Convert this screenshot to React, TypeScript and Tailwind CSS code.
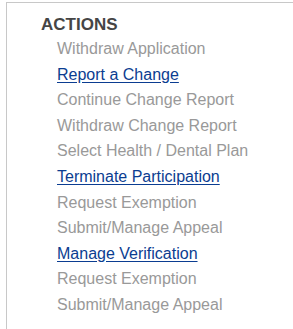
import React from 'react';

type Action = { label: string; link?: boolean };

const actions: Action[] = [
  { label: 'Withdraw Application' },
  { label: 'Report a Change', link: true },
  { label: 'Continue Change Report' },
  { label: 'Withdraw Change Report' },
  { label: 'Select Health / Dental Plan' },
  { label: 'Terminate Participation', link: true },
  { label: 'Request Exemption' },
  { label: 'Submit/Manage Appeal' },
  { label: 'Manage Verification', link: true },
  { label: 'Request Exemption' },
  { label: 'Submit/Manage Appeal' },
];

const App: React.FC = () => {
  return (
    <div className="w-[293px] h-[329px] bg-white pt-[2px] pl-[6px] overflow-hidden font-['Liberation_Sans',Arial,sans-serif]">
      <div className="h-full border-t border-l border-[#c8c8c8] pl-[33px] pt-[11px]">
        <h2 className="pl-[1px] text-[17px] font-bold text-[#454545] leading-[21px]">ACTIONS</h2>
        <ul className="pl-[17px] pt-[1px]">
          {actions.map((a, i) => (
            <li key={i} className="text-[16px] leading-[25.6px]">
              {a.link ? (
                <a href="#" className="text-[#0b3d91] underline underline-offset-[2px]">
                  {a.label}
                </a>
              ) : (
                <span className="text-[#999999]">{a.label}</span>
              )}
            </li>
          ))}
        </ul>
      </div>
    </div>
  );
};

export default App;
